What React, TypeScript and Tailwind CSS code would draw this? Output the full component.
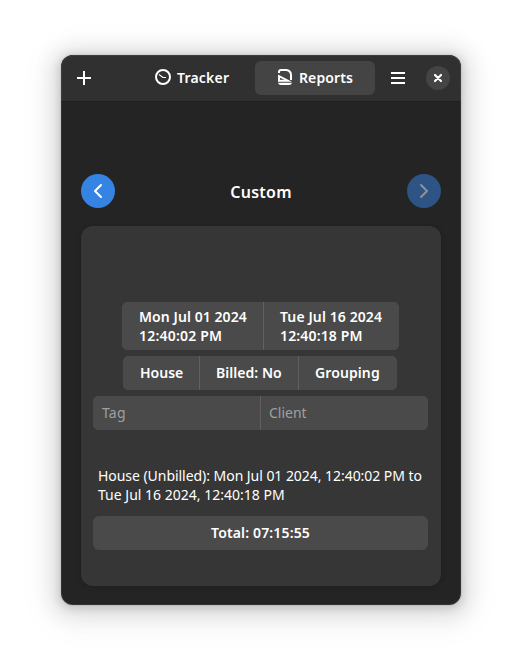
import type { ReactNode } from 'react';

const cell = 'flex h-full items-center bg-[#4a4a4a] whitespace-nowrap';

function TrackerIcon() {
  return (
    <svg className="mb-[2px]" width="16" height="16" viewBox="0 0 16 16" fill="none" stroke="white">
      <circle cx="8" cy="8" r="7" strokeWidth="2" />
      <path d="M4 5.500 8 8.500h3" strokeWidth="1.2" />
    </svg>
  );
}

function ReportsIcon() {
  return (
    <svg className="mb-[2px]" width="16" height="16" viewBox="0 0 16 16" fill="none" stroke="white">
      <path d="M2 4V3q0-2 2-2h5.500Q14 2 14 6v5" strokeWidth="2" />
      <path d="M1 5.500 15 12.700H1z" fill="white" stroke="none" />
      <path d="M3 8.700v2h4.500z" fill="#444" stroke="none" />
      <path d="M1 13.800q.5 2.200 3 2.200h8q2.500 0 3-2.200z" fill="white" stroke="none" />
    </svg>
  );
}

function RoundButton({ className, children }: { className: string; children: ReactNode }) {
  return (
    <button className={`flex size-[34px] items-center justify-center rounded-full ${className}`}>
      <svg width="16" height="16" viewBox="0 0 16 16" fill="none" stroke="currentColor" strokeWidth="2" strokeLinecap="round" strokeLinejoin="round">
        {children}
      </svg>
    </button>
  );
}

export default function App() {
  return (
    <div className="h-[672px] w-[522px] overflow-hidden bg-white px-[61px] pt-[55px] font-['Noto_Sans',sans-serif] text-[14px] leading-[19px] text-white">
      <main className="relative flex h-[550px] w-[400px] flex-col overflow-hidden rounded-[12px] bg-[#242424] shadow-[0_2px_8px_2px_rgba(0,0,0,.13),0_3px_20px_10px_rgba(0,0,0,.09),0_6px_32px_16px_rgba(0,0,0,.04),0_0_0_1px_rgba(0,0,0,.05)] after:pointer-events-none after:absolute after:inset-0 after:rounded-[12px] after:border after:border-white/7 after:content-['']">
        <header className="flex h-[47px] shrink-0 items-start border-b border-[#1f1f1f] bg-[#303030] pt-[6px] font-semibold">
          <button className="ml-[6px] flex size-[34px] items-center justify-center">
            <svg width="16" height="16" viewBox="0 0 16 16" stroke="white" strokeWidth="2"><path d="M8 1v14M1 8h14" /></svg>
          </button>
          <button className="ml-[31px] flex h-[34px] w-[120px] items-center gap-[6px] pl-[23px]">
            <TrackerIcon /><span className="pb-[2px] tracking-[0.2px]">Tracker</span>
          </button>
          <button className="ml-[3px] flex h-[34px] w-[120px] items-center gap-[6px] rounded-[6px] bg-[#444] pl-[22px]">
            <ReportsIcon /><span className="pb-[2px] tracking-[0.1px]">Reports</span>
          </button>
          <button className="ml-[6px] flex size-[34px] items-center justify-center">
            <svg width="16" height="16" viewBox="0 0 16 16" stroke="white" strokeWidth="2"><path d="M1 3h14M1 8h14M1 13h14" /></svg>
          </button>
          <button className="mt-[5px] ml-[11px] flex size-[24px] items-center justify-center rounded-full bg-[#444]">
            <svg width="16" height="16" viewBox="0 0 16 16" stroke="white" strokeWidth="2.2" strokeLinecap="round"><path d="m5 5 6 6M11 5l-6 6" /></svg>
          </button>
        </header>

        <div className="mt-[72px] flex h-[34px] shrink-0 items-center justify-between px-[20px]">
          <RoundButton className="bg-[#3584e4]"><path d="M11 2 5 8l6 6" /></RoundButton>
          <h1 className="pt-[2px] text-[16px] font-semibold tracking-[0.25px]">Custom</h1>
          <RoundButton className="bg-[#2d5484] text-[#929292]"><path d="m5 2 6 6-6 6" /></RoundButton>
        </div>

        <section className="mx-[20px] mt-[18px] flex h-[360px] shrink-0 flex-col items-start rounded-[12px] bg-[#363636] pt-[76px] shadow-[0_1px_3px_1px_rgba(0,0,0,.07),0_2px_6px_2px_rgba(0,0,0,.03)]">
          <div className="ml-[41px] flex h-[48px] w-[277px] gap-px overflow-hidden rounded-[6px] bg-[#606060] font-semibold">
            <button className={`${cell} w-[141px] pl-[17px] text-left`}>
              <span><span className="block tracking-[0.07px]">Mon Jul 01 2024</span><span className="block tracking-[0.2px]">12:40:02 PM</span></span>
            </button>
            <button className={`${cell} w-[135px] pl-[16px] text-left`}>
              <span><span className="block tracking-[0.1px]">Tue Jul 16 2024</span><span className="block tracking-[0.15px]">12:40:18 PM</span></span>
            </button>
          </div>
          <div className="mt-[6px] ml-[42px] flex h-[34px] w-[274px] gap-px overflow-hidden rounded-[6px] bg-[#606060] font-semibold">
            <button className={`${cell} w-[76px] pb-[2px] pl-[17px]`}>House</button>
            <button className={`${cell} w-[98px] pb-[2px] pl-[16px] tracking-[0.05px]`}>Billed: No</button>
            <button className={`${cell} w-[98px] pb-[2px] pl-[16px] tracking-[0.1px]`}>Grouping</button>
          </div>
          <div className="mt-[6px] ml-[12px] flex h-[34px] w-[335px] gap-px overflow-hidden rounded-[6px] bg-[#606060] text-[#a0a0a0]">
            <div className={`${cell} w-[167px] pb-[2px] pl-[9px] tracking-[0.2px]`}>Tag</div>
            <div className={`${cell} w-[167px] pb-[2px] pl-[8px]`}>Client</div>
          </div>
          <p className="mt-[36px] ml-[17px] whitespace-nowrap">
            <span className="block tracking-[-0.045px]">House (Unbilled): Mon Jul 01 2024, 12:40:02 PM to</span>
            <span className="block tracking-[0.01px]">Tue Jul 16 2024, 12:40:18 PM</span>
          </p>
          <button className="mt-[12px] ml-[12px] flex h-[34px] w-[335px] items-center justify-center rounded-[6px] bg-[#4a4a4a] pb-[2px] font-semibold tracking-[0.15px]">Total: 07:15:55</button>
        </section>
      </main>
    </div>
  );
}
